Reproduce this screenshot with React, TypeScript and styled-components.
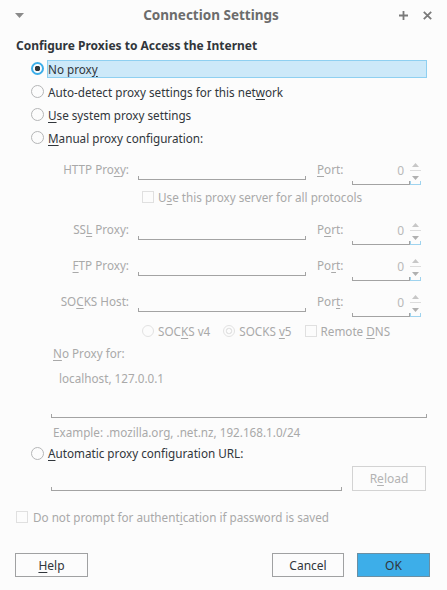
import React from "react";
import styled, { createGlobalStyle, css } from "styled-components";

const GlobalStyle = createGlobalStyle`
  html, body { margin: 0; padding: 0; background: #fcfcfc; }
  body { font-family: "Noto Sans", "DejaVu Sans", sans-serif; font-size: 11.7px; color: #31363b; }
  * { box-sizing: border-box; }
`;

const DISABLED = "#a9a9a9";

const Window = styled.div`
  width: 447px;
  height: 590px;
  background: #fcfcfc;
  display: flex;
  flex-direction: column;
  overflow: hidden;
`;

const TitleBar = styled.div`
  height: 30px;
  display: flex;
  align-items: center;
  padding: 0 12px 0 11px;
`;

const TitleText = styled.div`
  flex: 1;
  text-align: center;
  font-weight: 700;
  font-size: 13.5px;
  color: #6c6c6c;
  padding-left: 8px;
`;

const TitleIcon = styled.span<{ $ml?: number }>`
  width: 16px;
  display: flex;
  justify-content: center;
  align-items: center;
  margin-left: ${(p) => p.$ml ?? 8}px;
`;

const Content = styled.div`
  padding: 0 20px 0 16px;
  display: flex;
  flex-direction: column;
`;

const Heading = styled.div`
  margin-top: 7px;
  height: 18px;
  line-height: 18px;
  font-weight: 700;
  font-size: 12px;
`;

const RadioGroup = styled.div<{ $mt?: number }>`
  margin-top: ${(p) => p.$mt ?? 2}px;
  padding-left: 15px;
  display: flex;
  flex-direction: column;
`;

const RadioRow = styled.div<{ $h?: number }>`
  height: ${(p) => p.$h ?? 23}px;
  display: flex;
  align-items: center;
`;

const RadioCircle = styled.span<{ $checked?: boolean; $disabled?: boolean }>`
  width: 13px;
  height: 13px;
  border-radius: 50%;
  flex: none;
  background: #fcfcfc;
  border: 1px solid ${(p) => (p.$disabled ? "#e2e2e2" : "#b5b6b7")};
  ${(p) =>
    p.$checked &&
    !p.$disabled &&
    css`
      border: 2px solid #3daee9;
      background: radial-gradient(circle, #31363b 0 2.6px, #fcfcfc 3px);
    `}
  ${(p) =>
    p.$checked &&
    p.$disabled &&
    css`
      background: radial-gradient(circle, #fcfcfc 0 1.8px, #e4e4e4 2.2px 3.2px, #fcfcfc 3.6px);
    `}
`;

const RadioLabel = styled.span<{ $focused?: boolean }>`
  margin-left: 3px;
  height: 18px;
  line-height: 16px;
  border: 1px solid ${(p) => (p.$focused ? "#8fd0f1" : "transparent")};
  background: ${(p) => (p.$focused ? "#cde9f9" : "transparent")};
  flex: ${(p) => (p.$focused ? 1 : "none")};
  white-space: nowrap;
`;

const U = styled.span`
  text-decoration: underline;
  text-underline-offset: 2px;
`;

const FieldRow = styled.div<{ $mt?: number }>`
  height: 36px;
  margin-top: ${(p) => p.$mt ?? 0}px;
  padding-left: 32px;
  display: flex;
  align-items: center;
  color: ${DISABLED};
`;

const FieldLabel = styled.span`
  width: 81px;
  margin-right: 9px;
  text-align: right;
  white-space: nowrap;
`;

const tickLine = (color: string) => css`
  border-bottom: 1px solid ${color};
  background-image: linear-gradient(${color}, ${color}), linear-gradient(${color}, ${color});
  background-size: 1px 3px, 1px 3px;
  background-position: left bottom, right bottom;
  background-repeat: no-repeat;
`;

const LineInput = styled.div<{ $w: number; $h?: number }>`
  width: ${(p) => p.$w}px;
  height: ${(p) => p.$h ?? 20}px;
  ${tickLine("#a3a3a3")}
`;

const HostInput = styled(LineInput)`
  margin-top: 1px;
  margin-right: 11px;
`;

const PortLabel = styled.span`
  width: 35px;
  white-space: nowrap;
`;

const SpinBox = styled.div`
  width: 69px;
  height: 26px;
  margin-top: 5px;
  display: flex;
`;

const SpinValue = styled.div`
  flex: 1;
  display: flex;
  align-items: center;
  justify-content: flex-end;
  padding: 0 6px 1px 0;
  color: #b9b9b9;
  font-size: 12px;
  ${tickLine("#a3a3a3")}
`;

const SpinArrows = styled.div`
  width: 11px;
  display: flex;
  flex-direction: column;
  ${tickLine("#9fd3ee")}
`;

const SpinHalf = styled.div<{ $top?: boolean }>`
  flex: 1;
  display: flex;
  justify-content: center;
  align-items: ${(p) => (p.$top ? "flex-end" : "flex-start")};
  ${(p) =>
    p.$top &&
    css`
      border-bottom: 1px solid #dcdcdc;
      padding-bottom: 3px;
    `}
  ${(p) =>
    !p.$top &&
    css`
      padding-top: 5px;
    `}
`;

const CheckRow = styled.div<{ $pl: number; $h?: number; $mt?: number; $disabled?: boolean }>`
  height: ${(p) => p.$h ?? 20}px;
  margin-top: ${(p) => p.$mt ?? 0}px;
  padding-left: ${(p) => p.$pl}px;
  display: flex;
  align-items: center;
  color: ${(p) => (p.$disabled ? DISABLED : "#31363b")};
  white-space: nowrap;
`;

const CheckBox = styled.span<{ $disabled?: boolean }>`
  width: 12px;
  height: 12px;
  flex: none;
  border: 1px solid ${(p) => (p.$disabled ? "#e0e0e0" : "#b5b6b7")};
  background: #fcfcfc;
`;

const ControlText = styled.span<{ $gap?: number; $after?: number }>`
  margin-left: ${(p) => p.$gap ?? 4}px;
  margin-right: ${(p) => p.$after ?? 0}px;
`;

const SocksRadio = styled(RadioCircle)`
  width: 12px;
  height: 12px;
`;

const SmallLabel = styled.div<{ $h: number; $mt?: number }>`
  height: ${(p) => p.$h}px;
  margin-top: ${(p) => p.$mt ?? 0}px;
  line-height: ${(p) => p.$h}px;
  padding-left: 37px;
  color: ${DISABLED};
`;

const TextArea = styled.div`
  margin-left: 35px;
  height: 55px;
  padding: 6px 0 0 8px;
  line-height: 18px;
  color: ${DISABLED};
  ${tickLine("#a3a3a3")}
`;

const UrlRow = styled.div`
  margin-top: 3px;
  margin-left: 35px;
  display: flex;
  align-items: flex-end;
  gap: 10px;
`;

const ButtonBase = styled.div<{ $w: number }>`
  width: ${(p) => p.$w}px;
  height: 24px;
  display: flex;
  align-items: center;
  justify-content: center;
  border: 1px solid #a0a1a2;
  background: #fcfcfc;
  color: #31363b;
  font-size: 12px;
`;

const DisabledButton = styled(ButtonBase)`
  height: 25px;
  border-color: #d3d3d3;
  color: #b3b3b3;
`;

const PrimaryButton = styled(ButtonBase)`
  background: #3daee9;
  border-color: #6b8fa3;
`;

const Footer = styled.div`
  margin-top: 26px;
  padding: 0 17px 0 15px;
  display: flex;
  align-items: center;
  gap: 13px;
`;

const Spacer = styled.div`
  flex: 1;
`;

const Up = () => (
  <svg width="7" height="4" viewBox="0 0 7 4">
    <path d="M0 4 L3.5 0 L7 4 Z" fill="#c7c7c7" />
  </svg>
);
const Down = () => (
  <svg width="7" height="4" viewBox="0 0 7 4">
    <path d="M0 0 L3.5 4 L7 0 Z" fill="#b0b0b0" />
  </svg>
);

const Spin = () => (
  <SpinBox>
    <SpinValue>0</SpinValue>
    <SpinArrows>
      <SpinHalf $top>
        <Up />
      </SpinHalf>
      <SpinHalf>
        <Down />
      </SpinHalf>
    </SpinArrows>
  </SpinBox>
);

type ProxyProps = { label: React.ReactNode; port: React.ReactNode; mt?: number };
const ProxyRow = ({ label, port, mt }: ProxyProps) => (
  <FieldRow $mt={mt}>
    <FieldLabel>{label}</FieldLabel>
    <HostInput $w={168} />
    <PortLabel>{port}</PortLabel>
    <Spin />
  </FieldRow>
);

export default function App() {
  return (
    <Window>
      <GlobalStyle />
      <TitleBar>
        <TitleIcon $ml={0}>
          <svg width="9" height="5" viewBox="0 0 9 5">
            <path d="M0 0 L9 0 L4.5 5 Z" fill="#8a8a8a" />
          </svg>
        </TitleIcon>
        <TitleText>Connection Settings</TitleText>
        <TitleIcon>
          <svg width="9" height="9" viewBox="0 0 9 9">
            <path d="M4.5 0 V9 M0 4.5 H9" stroke="#7a7a7a" strokeWidth="1.8" />
          </svg>
        </TitleIcon>
        <TitleIcon>
          <svg width="9" height="9" viewBox="0 0 9 9">
            <path d="M0.8 0.8 L8.2 8.2 M8.2 0.8 L0.8 8.2" stroke="#7a7a7a" strokeWidth="1.8" />
          </svg>
        </TitleIcon>
      </TitleBar>
      <Content>
        <Heading>Configure Proxies to Access the Internet</Heading>
        <RadioGroup>
          <RadioRow>
            <RadioCircle $checked />
            <RadioLabel $focused>
              No prox<U>y</U>
            </RadioLabel>
          </RadioRow>
          <RadioRow>
            <RadioCircle />
            <RadioLabel>
              Auto-detect proxy settings for this net<U>w</U>ork
            </RadioLabel>
          </RadioRow>
          <RadioRow>
            <RadioCircle />
            <RadioLabel>
              <U>U</U>se system proxy settings
            </RadioLabel>
          </RadioRow>
          <RadioRow>
            <RadioCircle />
            <RadioLabel>
              <U>M</U>anual proxy configuration:
            </RadioLabel>
          </RadioRow>
        </RadioGroup>

        <ProxyRow
          mt={2}
          label={
            <>
              HTTP Pro<U>x</U>y:
            </>
          }
          port={
            <>
              <U>P</U>ort:
            </>
          }
        />
        <CheckRow $pl={126} $disabled>
          <CheckBox $disabled />
          <ControlText>
            U<U>s</U>e this proxy server for all protocols
          </ControlText>
        </CheckRow>
        <ProxyRow
          mt={4}
          label={
            <>
              SS<U>L</U> Proxy:
            </>
          }
          port={
            <>
              P<U>o</U>rt:
            </>
          }
        />
        <ProxyRow
          label={
            <>
              <U>F</U>TP Proxy:
            </>
          }
          port={
            <>
              Po<U>r</U>t:
            </>
          }
        />
        <ProxyRow
          label={
            <>
              SO<U>C</U>KS Host:
            </>
          }
          port={
            <>
              Por<U>t</U>:
            </>
          }
        />
        <CheckRow $pl={126} $h={24} $disabled>
          <SocksRadio $disabled />
          <ControlText $after={13}>
            SOC<U>K</U>S v4
          </ControlText>
          <SocksRadio $disabled $checked />
          <ControlText $after={13}>
            SOCKS <U>v</U>5
          </ControlText>
          <CheckBox $disabled />
          <ControlText>
            Remote <U>D</U>NS
          </ControlText>
        </CheckRow>

        <SmallLabel $h={20}>
          <U>N</U>o Proxy for:
        </SmallLabel>
        <TextArea>localhost, 127.0.0.1</TextArea>
        <SmallLabel $h={22} $mt={3}>
          Example: .mozilla.org, .net.nz, 192.168.1.0/24
        </SmallLabel>

        <RadioGroup $mt={0}>
          <RadioRow $h={20}>
            <RadioCircle />
            <RadioLabel>
              <U>A</U>utomatic proxy configuration URL:
            </RadioLabel>
          </RadioRow>
        </RadioGroup>
        <UrlRow>
          <LineInput $w={291} />
          <DisabledButton $w={74}>
            R<U>e</U>load
          </DisabledButton>
        </UrlRow>

        <CheckRow $pl={0} $mt={16} $disabled>
          <CheckBox $disabled />
          <ControlText $gap={5}>
            Do not prompt for authent<U>i</U>cation if password is saved
          </ControlText>
        </CheckRow>
      </Content>
      <Footer>
        <ButtonBase $w={73}>
          <U>H</U>elp
        </ButtonBase>
        <Spacer />
        <ButtonBase $w={72}>Cancel</ButtonBase>
        <PrimaryButton $w={73}>OK</PrimaryButton>
      </Footer>
    </Window>
  );
}
